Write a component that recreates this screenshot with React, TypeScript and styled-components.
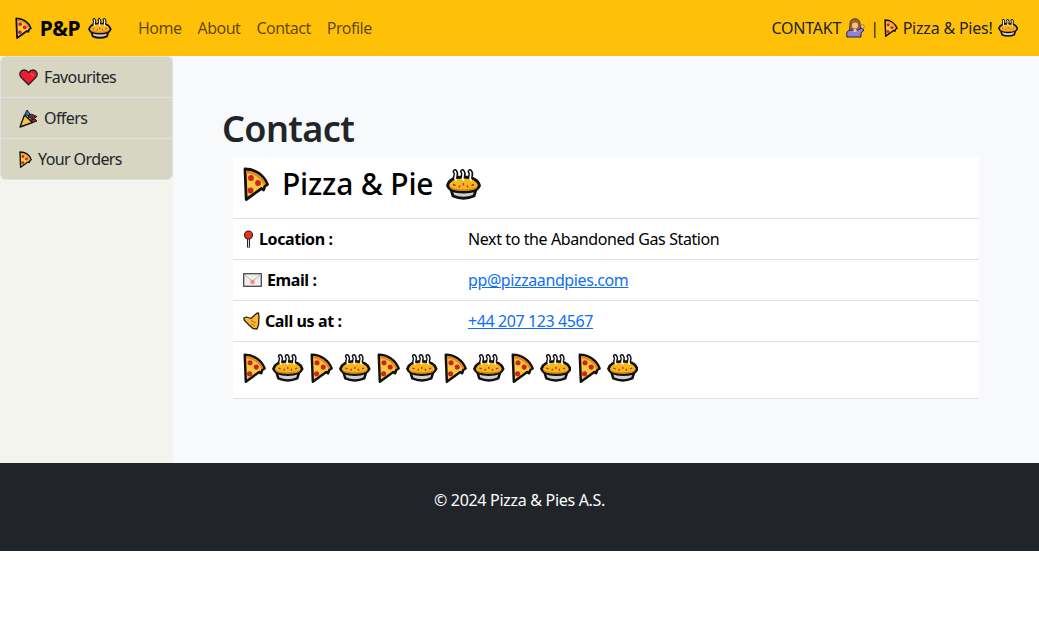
import React from 'react';
import styled, { createGlobalStyle } from 'styled-components';

const GlobalStyle = createGlobalStyle`
  html, body { margin: 0; padding: 0; background: #fff; }
  body {
    font-family: "Noto Sans", "Open Sans", "Liberation Sans", sans-serif;
    font-size: 16px;
    line-height: 24px;
    color: #212529;
    letter-spacing: -0.4px;
  }
`;

const Navbar = styled.nav`
  height: 56px;
  background: #ffc107;
  display: flex;
  align-items: center;
  padding: 0 21px 0 15px;
`;
const Brand = styled.div`
  display: flex;
  align-items: center;
  gap: 8px;
  font-size: 21px;
  font-weight: 700;
  color: #000;
  margin-right: 26px;
`;
const NavLinks = styled.div`
  display: flex;
  gap: 16px;
  flex: 1;
  letter-spacing: -0.5px;
`;
const NavLink = styled.a`
  color: rgba(0, 0, 0, 0.65);
`;
const NavText = styled.div`
  display: flex;
  align-items: center;
  gap: 5px;
  color: #212529;
  letter-spacing: -0.2px;
`;
const Body = styled.div`
  display: flex;
  height: 407px;
`;
const Sidebar = styled.aside`
  width: 173px;
  background: #f3f4ee;
  flex-shrink: 0;
`;
const SideList = styled.div`
  background: #d6d6c2;
  border: 1px solid #dee2e6;
  border-radius: 6px;
  letter-spacing: -0.6px;
`;
const SideItem = styled.a<{ $gap: number }>`
  display: flex;
  align-items: center;
  gap: ${(p) => p.$gap}px;
  height: 40px;
  padding-left: 18px;
  color: #212529;
  &:not(:last-child) { border-bottom: 1px solid #dee2e6; }
`;
const Main = styled.main`
  flex: 1;
  background: #f8f9fa;
  padding: 48px 60px 0 49px;
`;
const Title = styled.h1`
  margin: 0 0 3px;
  font-size: 36px;
  line-height: 50px;
  font-weight: 600;
  letter-spacing: -0.6px;
  color: #212529;
`;
const Card = styled.section`
  margin-left: 11px;
  background: #fff;
`;
const CardHead = styled.h2`
  margin: 0;
  height: 61px;
  display: flex;
  align-items: center;
  gap: 13px;
  padding: 0 10px 7px;
  font-size: 30px;
  font-weight: 500;
  letter-spacing: -0.2px;
  color: #000;
  box-sizing: border-box;
`;
const Row = styled.div`
  display: grid;
  grid-template-columns: 225px 1fr;
  align-items: center;
  height: 41px;
  padding-left: 10px;
  border-top: 1px solid #dee2e6;
  box-sizing: border-box;
  color: #000;
`;
const Label = styled.div`
  display: flex;
  align-items: center;
  gap: 5px;
  font-weight: 700;
`;
const Link = styled.a`
  color: #0d6efd;
  text-decoration: underline;
`;
const Strip = styled.div`
  height: 58px;
  display: flex;
  align-items: center;
  gap: 6.200px;
  padding: 0 10px 5px;
  box-sizing: border-box;
  border-top: 1px solid #dee2e6;
  border-bottom: 1px solid #dee2e6;
`;
const Footer = styled.footer`
  height: 88px;
  background: #212529;
  color: #fff;
  text-align: center;
  padding-top: 25px;
  box-sizing: border-box;
  letter-spacing: -0.3px;
`;

const Pizza = ({ h }: { h: number }) => (
  <svg width={(h * 26) / 34} height={h} viewBox="0 0 26 34" style={{ flexShrink: 0 }}>
    <path d="M2 2 C12 2 21 8 24.500 17.500 L22 19 L20.500 23 L18.500 21.500 L3.200 32.500 Z" fill="#fdc93a" stroke="#111" strokeWidth="2.800" strokeLinejoin="round" />
    <path d="M3.500 5 C11 5 18.500 10 22 17.500" fill="none" stroke="#e8861a" strokeWidth="2.400" />
    <circle cx="8" cy="11" r="2.900" fill="#c8242b" />
    <circle cx="15" cy="16" r="2.900" fill="#c8242b" />
    <circle cx="7.500" cy="23.500" r="2.900" fill="#c8242b" />
  </svg>
);

const steam = 'M10 11 C7 8 12 6 9 2.500 M17.500 11 C14.500 8 19.500 6 16.500 2.500 M25 11 C22 8 27 6 24 2.500';

const Pie = ({ h }: { h: number }) => (
  <svg width={(h * 35) / 31} height={h} viewBox="0 0 35 31" style={{ flexShrink: 0 }}>
    <path d={steam} fill="none" stroke="#111" strokeWidth="4.800" strokeLinecap="round" />
    <path d="M4.500 19 L7 27 Q17.500 31.500 28 27 L30.500 19 Z" fill="#cfcfcf" stroke="#111" strokeWidth="2.800" strokeLinejoin="round" />
    <path d="M1.500 16.500 C3 11 9 8 17.500 8 C26 8 32 11 33.500 16.500 C32 21 26 23 17.500 23 C9 23 3 21 1.500 16.500 Z" fill="#f7b81c" stroke="#111" strokeWidth="2.800" />
    <path d="M3 17.500 C8 21 27 21 32 17.500 C30 21 25 22 17.500 22 C10 22 5 21 3 17.500 Z" fill="#d9890e" />
    <path d="M7 15.500 l2.500 1 M13 18.500 l1 -2 M22 18.500 l-1 -2 M28 15.500 l-2.500 1 M17.500 14 v2.500" stroke="#c8242b" strokeWidth="1.400" />
    <path d={steam} fill="none" stroke="#fff" strokeWidth="1.800" strokeLinecap="round" />
  </svg>
);

const Heart = () => (
  <svg width="19" height="17" viewBox="0 0 19 17" style={{ flexShrink: 0 }}>
    <path d="M9.500 15.800 L1.800 8 C-0.500 4.500 1.800 1 5 1 C7 1 8.500 2 9.500 3.500 C10.500 2 12 1 14 1 C17.200 1 19.500 4.500 17.200 8 Z" fill="#ee1c2e" stroke="#222" strokeWidth="1.300" strokeLinejoin="round" />
    <path d="M12 4.500 L14.500 7" stroke="#f78a92" strokeWidth="1" />
  </svg>
);

const Party = () => (
  <svg width="19" height="19" viewBox="0 0 19 19" style={{ flexShrink: 0 }}>
    <path d="M1 18 L5.500 6 L13.500 13.500 Z" fill="#f5c63c" stroke="#111" strokeWidth="1.400" strokeLinejoin="round" />
    <path d="M6 5 L8 1 L11 5 L9 7 Z" fill="#2a7fa8" stroke="#111" strokeWidth="0.900" />
    <path d="M9 8 L12 5 L18 7.500 L14 10 Z" fill="#7a2a20" stroke="#111" strokeWidth="0.900" />
    <path d="M11 11 L16 10 L18 12 L14 13.500 Z" fill="#7a2a20" stroke="#111" strokeWidth="0.900" />
  </svg>
);

const PinIcon = () => (
  <svg width="11" height="19" viewBox="0 0 11 19" style={{ flexShrink: 0 }}>
    <path d="M5.500 9 V17.500" stroke="#222" strokeWidth="3" />
    <path d="M5.500 9 V17" stroke="#ddd" strokeWidth="1" />
    <circle cx="5.500" cy="5" r="4" fill="#f0311c" stroke="#222" strokeWidth="1.100" />
  </svg>
);

const Envelope = () => (
  <svg width="19" height="14" viewBox="0 0 19 14" style={{ flexShrink: 0 }}>
    <rect x="0.700" y="0.700" width="17.600" height="12.600" fill="#f2eeee" stroke="#555" strokeWidth="1.400" />
    <path d="M1 1.500 L9.500 8 L18 1.500" fill="none" stroke="#aaa" strokeWidth="0.800" />
    <circle cx="9.500" cy="9" r="2.300" fill="#ee8a80" />
  </svg>
);

const Shaka = () => (
  <svg width="17" height="18" viewBox="0 0 17 18" style={{ flexShrink: 0 }}>
    <path d="M0.800 6 L3.500 5 L8 6.500 L13.500 1.500 L15.500 1 L16 5 L15.500 13 L14 17 L10 16.500 L6 13 L1.500 8.500 Z" fill="#fbb92e" stroke="#222" strokeWidth="1.300" strokeLinejoin="round" />
    <path d="M8 8.500 L13 11 M8 11.500 L12 14" stroke="#a0661a" strokeWidth="0.900" />
  </svg>
);

const Woman = () => (
  <svg width="19" height="20" viewBox="0 0 19 20" style={{ flexShrink: 0 }}>
    <path d="M3 15 L4 6 C4 2 6.500 0.800 9 0.800 C11.500 0.800 14 2 14 6 L15 13 H5 Z" fill="#a5642a" stroke="#3c2410" strokeWidth="0.800" />
    <circle cx="9" cy="7.500" r="3.500" fill="#f6c28c" stroke="#5a3a1c" strokeWidth="0.500" />
    <path d="M0.800 19 V15 C0.800 13 3.500 12 6 12 H12 L15 10 L18 12 L15 15 V19 Z" fill="#8f83d8" stroke="#2a2050" strokeWidth="1" strokeLinejoin="round" />
    <rect x="7.500" y="11" width="3" height="3" fill="#f6c28c" />
    <circle cx="16.500" cy="8.500" r="1.800" fill="#f6c28c" stroke="#5a3a1c" strokeWidth="0.500" />
  </svg>
);

const stripIcons = [0, 1, 2, 3, 4, 5, 6, 7, 8, 9, 10, 11];

export default function App() {
  return (
    <>
      <GlobalStyle />
      <Navbar>
        <Brand>
          <Pizza h={22} />
          P&amp;P
          <Pie h={21} />
        </Brand>
        <NavLinks>
          <NavLink>Home</NavLink>
          <NavLink>About</NavLink>
          <NavLink>Contact</NavLink>
          <NavLink>Profile</NavLink>
        </NavLinks>
        <NavText>
          CONTAKT <Woman /> | <Pizza h={18} /> Pizza &amp; Pies! <Pie h={18} />
        </NavText>
      </Navbar>
      <Body>
        <Sidebar>
          <SideList>
            <SideItem $gap={6}><Heart /> Favourites</SideItem>
            <SideItem $gap={6}><Party /> Offers</SideItem>
            <SideItem $gap={6}><Pizza h={17} /> Your Orders</SideItem>
          </SideList>
        </Sidebar>
        <Main>
          <Title>Contact</Title>
          <Card>
            <CardHead>
              <Pizza h={34} /> Pizza &amp; Pie <Pie h={31} />
            </CardHead>
            <Row>
              <Label><PinIcon /> Location :</Label>
              <span>Next to the Abandoned Gas Station</span>
            </Row>
            <Row>
              <Label><Envelope /> Email :</Label>
              <Link>pp@pizzaandpies.com</Link>
            </Row>
            <Row>
              <Label><Shaka /> Call us at :</Label>
              <Link>+44 207 123 4567</Link>
            </Row>
            <Strip>
              {stripIcons.map((i) => (i % 2 === 0 ? <Pizza key={i} h={30} /> : <Pie key={i} h={28} />))}
            </Strip>
          </Card>
        </Main>
      </Body>
      <Footer>© 2024 Pizza &amp; Pies A.S.</Footer>
    </>
  );
}
